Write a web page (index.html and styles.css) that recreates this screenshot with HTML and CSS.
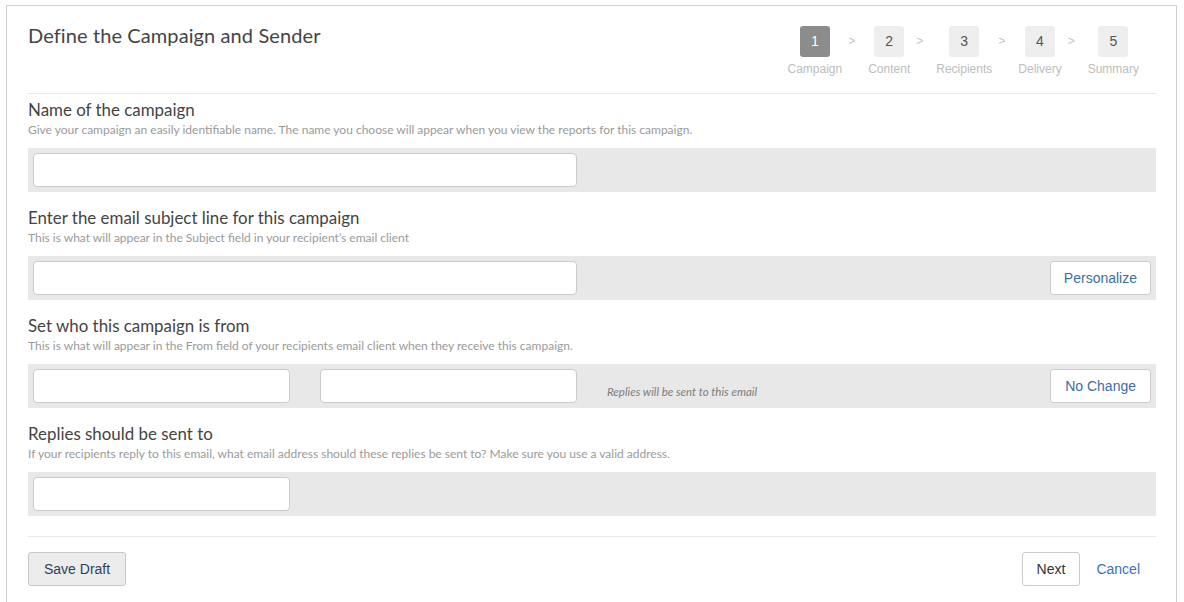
FILE: index.html
```html
<!DOCTYPE html>
<html>
<head>
<meta charset="utf-8">
<link rel="stylesheet" href="styles.css">
</head>
<body>
<div class="card">
  <div class="header">
    <h1 class="title">Define the Campaign and Sender</h1>
    <div class="steps">
      <div class="step active"><div class="box">1</div><div class="label">Campaign</div></div>
      <div class="sep">&gt;</div>
      <div class="step"><div class="box">2</div><div class="label">Content</div></div>
      <div class="sep">&gt;</div>
      <div class="step"><div class="box">3</div><div class="label">Recipients</div></div>
      <div class="sep">&gt;</div>
      <div class="step"><div class="box">4</div><div class="label">Delivery</div></div>
      <div class="sep">&gt;</div>
      <div class="step"><div class="box">5</div><div class="label">Summary</div></div>
    </div>
  </div>

  <div class="section">
    <h2 class="heading">Name of the campaign</h2>
    <p class="desc">Give your campaign an easily identifiable name. The name you choose will appear when you view the reports for this campaign.</p>
    <div class="band">
      <input class="field wide" type="text">
    </div>
  </div>

  <div class="section">
    <h2 class="heading">Enter the email subject line for this campaign</h2>
    <p class="desc">This is what will appear in the Subject field in your recipient’s email client</p>
    <div class="band">
      <input class="field wide" type="text">
      <button class="btn push">Personalize</button>
    </div>
  </div>

  <div class="section">
    <h2 class="heading">Set who this campaign is from</h2>
    <p class="desc">This is what will appear in the From field of your recipients email client when they receive this campaign.</p>
    <div class="band">
      <input class="field half" type="text">
      <input class="field half gap" type="text">
      <span class="note">Replies will be sent to this email</span>
      <button class="btn push nochange">No Change</button>
    </div>
  </div>

  <div class="section">
    <h2 class="heading">Replies should be sent to</h2>
    <p class="desc">If your recipients reply to this email, what email address should these replies be sent to? Make sure you use a valid address.</p>
    <div class="band">
      <input class="field half" type="text">
    </div>
  </div>

  <div class="footer">
    <button class="btn draft">Save Draft</button>
    <div class="actions">
      <button class="btn next">Next</button>
      <a class="cancel" href="#">Cancel</a>
    </div>
  </div>
</div>
</body>
</html>
```

FILE: styles.css
```css
* { box-sizing: border-box; }

body {
  margin: 5px 0 0 6px;
  background: #fff;
  font-family: "Lato", "Liberation Sans", sans-serif;
}

.card {
  width: 1171px;
  border: 1px solid #cfcfcf;
  padding: 0 20px 20px 21px;
  background: #fff;
}

.header {
  display: flex;
  justify-content: space-between;
  align-items: flex-start;
  padding-top: 20px;
  padding-bottom: 17px;
  border-bottom: 1px solid #e8e8e8;
}

.title {
  margin: -3px 0 0;
  font-size: 20px;
  line-height: 24px;
  font-weight: 400;
  color: #444;
  letter-spacing: 0.1px;
}

.steps {
  display: flex;
  align-items: flex-start;
  margin-right: 17px;
  font-family: "Liberation Sans", Arial, sans-serif;
}

.step {
  display: flex;
  flex-direction: column;
  align-items: center;
}

.box {
  width: 30px;
  height: 31px;
  border-radius: 3px;
  background: #eeeeee;
  color: #555;
  font-size: 14px;
  line-height: 31px;
  text-align: center;
}

.step.active .box {
  background: #8c8c8c;
  color: #fff;
}

.label {
  margin-top: 5px;
  font-size: 12px;
  line-height: 14px;
  color: #bdbdbd;
}

.sep {
  margin: 0 13px 0 6px;
  font-size: 12px;
  line-height: 31px;
  color: #c4c4c4;
}

.section {
  padding-top: 6px;
}

.section + .section {
  padding-top: 16px;
}

.heading {
  margin: 0;
  font-size: 16.9px;
  line-height: 20px;
  font-weight: 400;
  color: #444;
}

.desc {
  margin: 2px 0 0;
  font-size: 12px;
  line-height: 16px;
  color: #9a9a9a;
}

.band {
  display: flex;
  align-items: center;
  margin-top: 10px;
  height: 44px;
  padding: 0 5px;
  background: #e8e8e8;
}

.field {
  height: 34px;
  border: 1px solid #cbcbcb;
  border-radius: 4px;
  background: #fff;
  padding: 0 10px;
  font-size: 14px;
}

.wide { width: 544px; }
.half { width: 257px; }
.gap { margin-left: 30px; }

.note {
  margin-left: 30px;
  padding-top: 10px;
  font-size: 11.5px;
  font-style: italic;
  color: #7d7d7d;
}

.btn {
  height: 34px;
  border: 1px solid #cccccc;
  border-radius: 3px;
  background: #fff;
  padding: 0 13px;
  font-family: "Liberation Sans", Arial, sans-serif;
  font-size: 14px;
  color: #3d6ea5;
  cursor: pointer;
}

.push { margin-left: auto; }

.nochange { padding: 0 14px; }

.footer {
  display: flex;
  justify-content: space-between;
  align-items: center;
  margin-top: 20px;
  padding-top: 15px;
  border-top: 1px solid #e8e8e8;
}

.draft {
  background: #ececec;
  color: #2e3f60;
  padding: 0 15px;
  border-color: #c8c8c8;
}

.actions {
  display: flex;
  align-items: center;
}

.next {
  color: #333;
  padding: 0 14px;
}

.cancel {
  margin-left: 16px;
  margin-right: 16px;
  font-family: "Liberation Sans", Arial, sans-serif;
  font-size: 14px;
  color: #3a73b0;
  text-decoration: none;
}
```
